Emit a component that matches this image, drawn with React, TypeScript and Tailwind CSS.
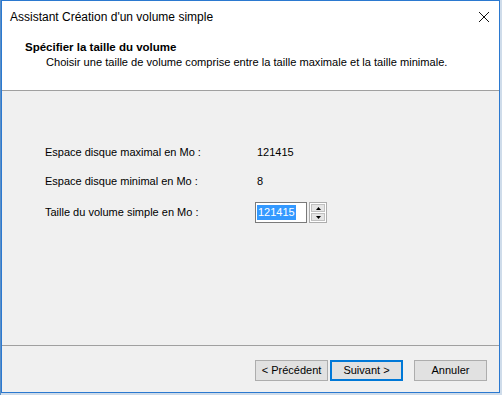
import React from "react";

export default function App() {
  const font = { fontFamily: '"Liberation Sans", Arial, sans-serif' };
  return (
    <div className="w-[502px] h-[395px] bg-[#cfdcea] flex overflow-hidden" style={font}>
      <div className="w-[1px] h-full bg-[#5b8fc7]" />
      <div className="w-[499px] h-[393px] border border-[#2b79d0] bg-[#f0f0f0] flex flex-col">
        {/* Title + header (white) */}
        <div className="bg-white h-[90px] border-b border-[#a0a0a0] flex flex-col">
          <div className="h-[31px] flex items-center justify-between pl-[8px] pr-[8px]">
            <span className="text-[12px] text-[#000]">Assistant Création d'un volume simple</span>
            <svg width="12" height="12" viewBox="0 0 12 12" className="mr-[1px]">
              <path d="M1 1 L11 11 M11 1 L1 11" stroke="#111" strokeWidth="1" />
            </svg>
          </div>
          <div className="pl-[23px] pt-[8px]">
            <div className="text-[11.5px] font-bold text-black leading-[14px]">Spécifier la taille du volume</div>
            <div className="pl-[21px] text-[11.1px] text-black leading-[16px]">
              Choisir une taille de volume comprise entre la taille maximale et la taille minimale.
            </div>
          </div>
        </div>
        {/* Body */}
        <div className="flex-1 pl-[43px] pt-[54px] text-[11px] text-black">
          <div className="flex h-[14px] items-center">
            <span className="w-[212px]">Espace disque maximal en Mo :</span>
            <span>121415</span>
          </div>
          <div className="flex h-[14px] items-center mt-[15px]">
            <span className="w-[212px]">Espace disque minimal en Mo :</span>
            <span>8</span>
          </div>
          <div className="flex items-center mt-[14px]">
            <span className="w-[210px]">Taille du volume simple en Mo :</span>
            <div className="w-[52px] h-[21px] border border-[#7a7a7a] bg-white flex items-center pl-[1px]">
              <span className="bg-[#3399ff] text-white leading-[15px] px-[1px]">121415</span>
            </div>
            <div className="ml-[2px] w-[18px] h-[21px] border border-[#adadad] bg-white flex flex-col p-[1px] gap-[1px]">
              <div className="flex-1 bg-[#e5e5e5] border border-[#c0c0c0] flex items-center justify-center">
                <svg width="5" height="3" viewBox="0 0 5 3"><path d="M2.5 0 L5 3 L0 3 Z" fill="#000" /></svg>
              </div>
              <div className="flex-1 bg-[#e5e5e5] border border-[#c0c0c0] flex items-center justify-center">
                <svg width="5" height="3" viewBox="0 0 5 3"><path d="M0 0 L5 0 L2.5 3 Z" fill="#000" /></svg>
              </div>
            </div>
          </div>
        </div>
        {/* Footer */}
        <div className="h-[47px] border-t border-[#a0a0a0] flex items-start pt-[14px] pl-[253px] text-[11px] text-black">
          <button className="w-[73px] h-[21px] bg-[#e1e1e1] border border-[#adadad] flex items-center justify-center">
            &lt; Précédent
          </button>
          <button className="ml-[2px] w-[73px] h-[21px] bg-[#e1e1e1] border-2 border-[#0078d7] flex items-center justify-center">
            Suivant &gt;
          </button>
          <button className="ml-[11px] w-[73px] h-[21px] bg-[#e1e1e1] border border-[#adadad] flex items-center justify-center">
            Annuler
          </button>
        </div>
      </div>
    </div>
  );
}
